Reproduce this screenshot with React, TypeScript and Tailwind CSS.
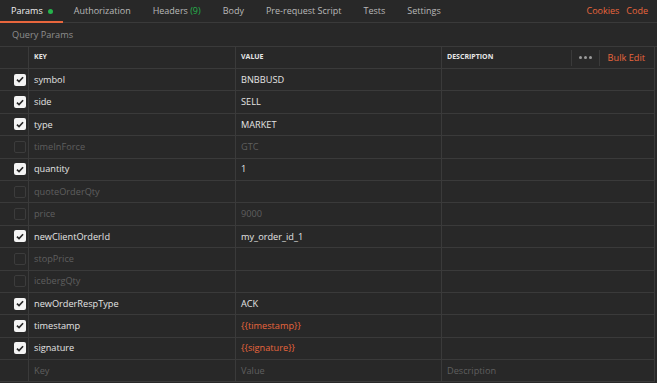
import React from 'react';

type Param = {
  key: string;
  value: string;
  on: boolean;
  variable?: boolean;
};

const params: Param[] = [
  { key: 'symbol', value: 'BNBBUSD', on: true },
  { key: 'side', value: 'SELL', on: true },
  { key: 'type', value: 'MARKET', on: true },
  { key: 'timeInForce', value: 'GTC', on: false },
  { key: 'quantity', value: '1', on: true },
  { key: 'quoteOrderQty', value: '', on: false },
  { key: 'price', value: '9000', on: false },
  { key: 'newClientOrderId', value: 'my_order_id_1', on: true },
  { key: 'stopPrice', value: '', on: false },
  { key: 'icebergQty', value: '', on: false },
  { key: 'newOrderRespType', value: 'ACK', on: true },
  { key: 'timestamp', value: '{{timestamp}}', on: true, variable: true },
  { key: 'signature', value: '{{signature}}', on: true, variable: true },
];

const Check: React.FC<{ on: boolean }> = ({ on }) =>
  on ? (
    <div className="w-[12px] h-[12px] rounded-[2px] bg-[#f4f4f4] flex items-center justify-center">
      <svg width="8" height="7" viewBox="0 0 9 8">
        <path d="M1 4.2 L3.4 6.4 L8 1.4" fill="none" stroke="#282828" strokeWidth="1.9" />
      </svg>
    </div>
  ) : (
    <div className="w-[12px] h-[12px] rounded-[2px] border border-[#3c3c3c]" />
  );

const tabs = ['Authorization', 'Headers', 'Body', 'Pre-request Script', 'Tests', 'Settings'];

export default function App() {
  return (
    <div
      className="w-[657px] h-[383px] overflow-hidden bg-[#282828] text-[9.2px] text-[#e0e0e0]"
      style={{ fontFamily: '"Open Sans", sans-serif' }}
    >
      {/* tab bar */}
      <div className="h-[23px] flex items-center border-b border-[#3a3a3a] pr-[9px] text-[9px]">
        <div className="relative h-full flex items-center pl-[11px] pr-[10px] text-[#f0f0f0]">
          Params
          <span className="ml-[5px] w-[5px] h-[5px] rounded-full bg-[#26b34c]" />
          <div className="absolute left-0 right-0 bottom-[-1px] h-[2px] bg-[#e8663d]" />
        </div>
        {tabs.map((t) => (
          <div key={t} className="px-[11px] text-[#b8b8b8]">
            {t}
            {t === 'Headers' && <span className="text-[#26b34c]"> (9)</span>}
          </div>
        ))}
        <div className="ml-auto flex gap-[7px] text-[#e8663d]">
          <span>Cookies</span>
          <span>Code</span>
        </div>
      </div>

      <div className="h-[24px] flex items-center pl-[12px] border-b border-[#3a3a3a] text-[#8e8e8e]">
        Query Params
      </div>

      {/* table */}
      <div className="pr-[2px]">
        <div className="grid grid-cols-[29px_207px_206px_1fr] h-[22px] border-b border-[#3a3a3a] border-r">
          <div className="border-r border-[#3a3a3a]" />
          <div className="border-r border-[#3a3a3a] flex items-center pl-[5px] text-[7px] font-bold text-[#e6e6e6]">KEY</div>
          <div className="border-r border-[#3a3a3a] flex items-center pl-[5px] text-[7px] font-bold text-[#e6e6e6]">VALUE</div>
          <div className="flex items-center pl-[5px] text-[7px] font-bold text-[#e6e6e6]">
            DESCRIPTION
            <div className="ml-auto flex items-center h-full">
              <div className="h-[16px] border-l border-[#3a3a3a] px-[7px] flex items-center gap-[2px]">
                <span className="w-[3px] h-[3px] rounded-full bg-[#9a9a9a]" />
                <span className="w-[3px] h-[3px] rounded-full bg-[#9a9a9a]" />
                <span className="w-[3px] h-[3px] rounded-full bg-[#9a9a9a]" />
              </div>
              <div className="h-[16px] border-l border-[#3a3a3a] pl-[8px] pr-[9px] flex items-center text-[9.2px] font-normal text-[#e8663d]">
                Bulk Edit
              </div>
            </div>
          </div>
        </div>

        {params.map((p) => (
          <div
            key={p.key}
            className="grid grid-cols-[29px_207px_206px_1fr] h-[22.4px] border-b border-r border-[#3a3a3a]"
          >
            <div className="border-r border-[#3a3a3a] flex items-center pl-[14px]">
              <Check on={p.on} />
            </div>
            <div className={`border-r border-[#3a3a3a] flex items-center pl-[5px] ${p.on ? 'text-[#e4e4e4]' : 'text-[#5f5f5f]'}`}>
              {p.key}
            </div>
            <div
              className={`border-r border-[#3a3a3a] flex items-center pl-[5px] ${
                p.variable ? 'text-[#e8663d]' : p.on ? 'text-[#e4e4e4]' : 'text-[#5f5f5f]'
              }`}
            >
              {p.value}
            </div>
            <div />
          </div>
        ))}

        <div className="grid grid-cols-[29px_207px_206px_1fr] h-[22.4px] border-b border-r border-[#3a3a3a] text-[#5f5f5f]">
          <div className="border-r border-[#3a3a3a]" />
          <div className="border-r border-[#3a3a3a] flex items-center pl-[5px]">Key</div>
          <div className="border-r border-[#3a3a3a] flex items-center pl-[5px]">Value</div>
          <div className="flex items-center pl-[5px]">Description</div>
        </div>
      </div>
    </div>
  );
}
